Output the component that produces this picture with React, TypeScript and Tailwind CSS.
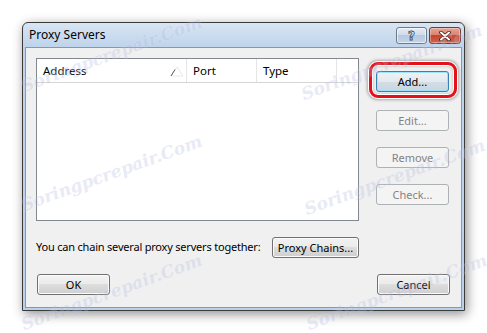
import React from "react";

const font = { fontFamily: '"Noto Sans", "Open Sans", sans-serif' };

function Btn({
  children,
  w,
  disabled,
  def,
}: {
  children: React.ReactNode;
  w: string;
  disabled?: boolean;
  def?: boolean;
}) {
  let cls =
    "h-[21px] flex items-center justify-center rounded-[3px] text-[11px] leading-none border ";
  if (disabled) {
    cls += "border-[#adb2b5] bg-[#f4f4f4] text-[#838383]";
  } else if (def) {
    cls +=
      "border-[#3c7fb1] text-black bg-[linear-gradient(#eef2f5_0%,#e3e9ee_50%,#d3dde6_50%,#c9d6e1_100%)] shadow-[inset_0_0_0_1px_#9fe3fb]";
  } else {
    cls +=
      "border-[#707070] text-black bg-[linear-gradient(#f2f2f2_0%,#ebebeb_50%,#dddddd_50%,#cfcfcf_100%)] shadow-[inset_0_0_0_1px_#fbfbfb]";
  }
  return <div className={cls + " " + w}>{children}</div>;
}

function Watermark({ x, y }: { x: number; y: number }) {
  return (
    <div
      className="absolute pointer-events-none whitespace-nowrap origin-bottom-left text-[17px] leading-none italic font-bold text-[#b4bce2] opacity-30"
      style={{
        left: x,
        top: y - 17,
        transform: "rotate(-20deg)",
        fontFamily: '"DejaVu Serif", serif',
        textShadow: "0 0 2px #ffffff",
      }}
    >
      Soringpcrepair.Com
    </div>
  );
}

export default function App() {
  return (
    <div
      className="relative w-[487px] h-[333px] overflow-hidden bg-white pt-[22px] pl-[22px]"
      style={font}
    >
      {/* Window */}
      <div className="w-[443px] h-[289px] flex flex-col rounded-t-[6px] border border-[#3b3b3b] bg-[linear-gradient(#d8e5f3_0px,#c0d5ec_22px,#b9d1ea_100%)] shadow-[2px_3px_12px_rgba(0,0,0,0.45)]">
        {/* Title bar */}
        <div className="h-[24px] flex items-start justify-between pl-[6px] pr-[3px] shrink-0">
          <div className="text-[12px] leading-none text-black mt-[6px]">Proxy Servers</div>
          <div className="flex gap-[2px] mt-[4px]">
            <div className="w-[31px] h-[17px] rounded-[3px] border border-[#6d7a8a] bg-[linear-gradient(#e4ecf5_0%,#cfdbe9_50%,#b7c9de_50%,#c3d4e7_100%)] shadow-[inset_0_0_0_1px_rgba(255,255,255,0.6)] flex items-center justify-center">
              <span
                className="text-[12px] leading-none font-bold text-white"
                style={{ fontFamily: '"DejaVu Sans", sans-serif', WebkitTextStroke: "0.8px #3a4757" }}
              >
                ?
              </span>
            </div>
            <div className="w-[32px] h-[17px] rounded-[3px] border border-[#7a3a2e] bg-[linear-gradient(#e6a493_0%,#d9816c_50%,#c5452e_50%,#d2624a_100%)] shadow-[inset_0_0_0_1px_rgba(255,255,255,0.35)] flex items-center justify-center">
              <svg width="14" height="10" viewBox="0 0 14 10">
                <path d="M3 1.5 L11 8.5 M11 1.5 L3 8.5" stroke="#3a1a14" strokeWidth="3.6" strokeLinecap="round" />
                <path d="M3 1.5 L11 8.5 M11 1.5 L3 8.5" stroke="#ffffff" strokeWidth="2" strokeLinecap="round" />
              </svg>
            </div>
          </div>
        </div>
        {/* Client */}
        <div className="flex-1 mx-[2px] mb-[2px] border border-[#8698ad] bg-[#f0f0f0] pl-[10px] pt-[10px] flex flex-col">
          <div className="flex">
            {/* List */}
            <div className="w-[323px] h-[163px] border border-[#828790] bg-white">
              <div className="h-[24px] border-b border-[#d5d5d5] flex text-[11.5px] text-black">
                <div className="w-[150px] border-r border-[#e5e5e5] flex items-center pl-[6px] relative">
                  Address
                  <svg className="absolute left-[133px] top-[7px]" width="14" height="11" viewBox="0 0 14 11">
                    <path d="M1 10 L7 1 L13 10 Z" fill="none" stroke="#e8e8e8" strokeWidth="1" />
                    <path d="M1 10 L5 3.5" stroke="#555" strokeWidth="1" />
                  </svg>
                </div>
                <div className="w-[70px] border-r border-[#e5e5e5] flex items-center pl-[6px]">Port</div>
                <div className="w-[80px] border-r border-[#e5e5e5] flex items-center pl-[6px]">Type</div>
              </div>
            </div>
            {/* Buttons */}
            <div className="relative ml-[17px] w-[73px] flex flex-col pt-[13px]">
              <Btn w="w-[73px]" def>
                Add...
              </Btn>
              <div className="absolute left-[-7px] top-[4px] w-[88px] h-[36px] rounded-[9px] border-[3px] border-[#e3121a] shadow-[0_0_0_1px_#ffffff,0_0_3px_2px_rgba(0,0,0,0.3),inset_0_0_0_1px_#ffffff,inset_0_0_3px_1px_rgba(0,0,0,0.25)]" />
              <div className="mt-[18px]">
                <Btn w="w-[73px]" disabled>
                  Edit...
                </Btn>
              </div>
              <div className="mt-[16px]">
                <Btn w="w-[73px]" disabled>
                  Remove
                </Btn>
              </div>
              <div className="mt-[16px]">
                <Btn w="w-[73px]" disabled>
                  Check...
                </Btn>
              </div>
            </div>
          </div>
          <div className="flex items-center mt-[16px]">
            <div className="w-[236px] text-[11px] tracking-[-0.2px] text-black whitespace-nowrap">
              You can chain several proxy servers together:
            </div>
            <Btn w="w-[87px]">Proxy Chains...</Btn>
          </div>
          <div className="flex mt-[16px]">
            <Btn w="w-[73px] ml-[1px]">OK</Btn>
            <div className="ml-[267px]">
              <Btn w="w-[73px]">Cancel</Btn>
            </div>
          </div>
        </div>
      </div>
      <Watermark x={25} y={95} />
      <Watermark x={25} y={214} />
      <Watermark x={25} y={333} />
      <Watermark x={305} y={103} />
      <Watermark x={308} y={218} />
      <Watermark x={310} y={333} />
    </div>
  );
}
